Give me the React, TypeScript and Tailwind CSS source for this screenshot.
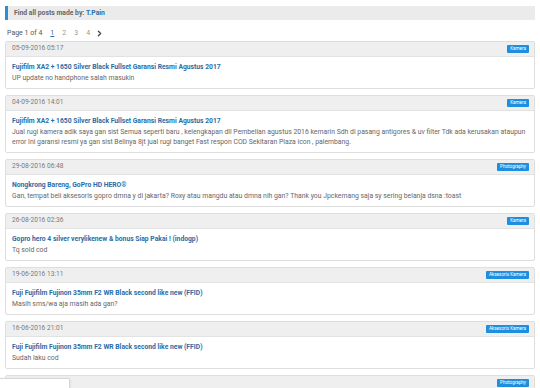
import { ChevronRight } from "lucide-react"

const posts = [
  {
    date: "05-09-2016 05:17",
    tag: "Kamera",
    title: "Fujifilm XA2 + 1650 Silver Black Fullset Garansi Resmi Agustus 2017",
    text: "UP update no handphone salah masukin",
  },
  {
    date: "04-09-2016 14:01",
    tag: "Kamera",
    title: "Fujifilm XA2 + 1650 Silver Black Fullset Garansi Resmi Agustus 2017",
    text: "Jual rugi kamera adik saya gan sist Semua seperti baru , kelengkapan dll Pembelian agustus 2016 kemarin Sdh di pasang antigores & uv filter Tdk ada kerusakan ataupun error Ini garansi resmi ya gan sist Belinya 8jt jual rugi banget Fast respon COD Sekitaran Plaza icon , palembang.",
  },
  {
    date: "29-08-2016 06:48",
    tag: "Photography",
    title: "Nongkrong Bareng, GoPro HD HERO®",
    text: "Gan, tempat beli aksesoris gopro dmna y di jakarta? Roxy atau mangdu atau dmna nih gan? Thank you Jpckemang saja sy sering belanja dsna :toast",
  },
  {
    date: "26-08-2016 02:36",
    tag: "Kamera",
    title: "Gopro hero 4 silver verylikenew & bonus Siap Pakai ! (indogp)",
    text: "Tq sold cod",
  },
  {
    date: "19-06-2016 13:11",
    tag: "Aksesoris Kamera",
    title: "Fuji Fujifilm Fujinon 35mm F2 WR Black second like new (FFID)",
    text: "Masih sms/wa aja masih ada gan?",
  },
  {
    date: "16-06-2016 21:01",
    tag: "Aksesoris Kamera",
    title: "Fuji Fujifilm Fujinon 35mm F2 WR Black second like new (FFID)",
    text: "Sudah laku cod",
  },
  {
    date: "14-06-2016 10:22",
    tag: "Photography",
    title: "",
    text: "",
  },
]

function PostCard({ post }: { post: (typeof posts)[number] }) {
  return (
    <div className="rounded-[2px] border border-[#dedede] bg-white">
      <div className="flex h-[15px] items-center justify-between border-b border-[#e2e2e2] bg-[#efefef] pl-[6px] pr-[5px]">
        <span className="text-[6.6px] text-[#7a7a7a]">{post.date}</span>
        <span className="flex h-[8px] items-center rounded-[1px] bg-[#1e8fe0] px-[3px] text-[4.6px] text-white">
          {post.tag}
        </span>
      </div>
      <div className="pb-[5px] pl-[6px] pr-[6px] pt-[5px]">
        <p className="text-[6.75px] font-bold leading-[11px] text-[#2b6ca6]">{post.title}</p>
        <p className="text-[6.85px] leading-[10px] text-[#666]">{post.text}</p>
      </div>
    </div>
  )
}

export default function App() {
  return (
    <div className="relative h-[388px] w-[540px] overflow-hidden bg-white font-['Roboto','Liberation_Sans',sans-serif]">
      <div className="px-[5px] pt-[6px]">
        <div className="flex h-[14px] items-center border-l-[3px] border-[#2b8fd6] bg-[#ebebeb] pl-[6px] text-[6.8px] font-bold text-[#666]">
          Find all posts made by:&nbsp;<span className="text-[#2b6ca6]">T.Pain</span>
        </div>

        <div className="mt-[8px] flex h-[10px] items-center pl-[2px] text-[7px] text-[#555]">
          <span>Page 1 of 4</span>
          <span className="ml-[8px] text-[#2b6ca6] underline">1</span>
          <span className="ml-[8px] text-[#999]">2</span>
          <span className="ml-[8px] text-[#999]">3</span>
          <span className="ml-[8px] text-[#999]">4</span>
          <ChevronRight className="ml-[5px] h-[9px] w-[9px] text-[#444]" strokeWidth={3.5} />
        </div>

        <div className="mt-[3px] flex flex-col gap-[6px]">
          {posts.map((post, i) => (
            <PostCard key={i} post={post} />
          ))}
        </div>
      </div>

      <div className="absolute bottom-0 left-0 h-[10px] w-[70px] rounded-tr-[2px] border-r border-t border-[#d6d6d6] bg-white shadow-sm" />
    </div>
  )
}
